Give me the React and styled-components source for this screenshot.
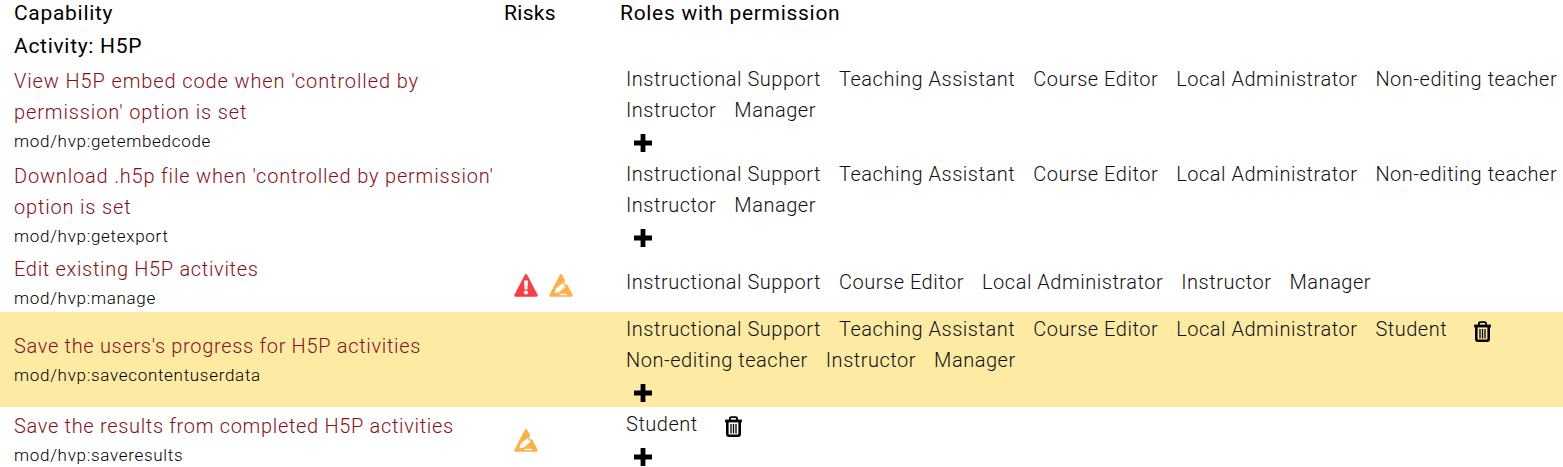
import React from "react";
import styled, { createGlobalStyle } from "styled-components";

const Global = createGlobalStyle`
  html, body { margin: 0; padding: 0; background: #fff; overflow: hidden; }
  body { font-family: Roboto, "Liberation Sans", sans-serif; font-size: 20px; color: #1d2125; font-weight: 300; letter-spacing: .52px; }
`;
const Page = styled.div`width: 1563px; height: 467px; overflow: hidden;`;
const Row = styled.div`
  display: grid;
  grid-template-columns: 504px 116px 1fr;
  height: ${p => p.$h}px;
  background: ${p => p.$hl ? "#fdeba4" : "transparent"};
  margin-bottom: ${p => p.$mb ?? 1}px;
`;
const HeadCell = styled.div`
  color: #000;
  font-weight: 400;
  font-size: 21px;
  letter-spacing: ${p => p.$ls ?? .7}px;
  line-height: 26px;
  padding-left: ${p => p.$left ?? 0}px;
`;
const CapCell = styled.div`
  padding: ${p => p.$top ?? 0}px 0 ${p => p.$bottom ?? 0}px 14px;
  display: flex;
  flex-direction: column;
  justify-content: center;
  box-sizing: border-box;
  white-space: nowrap;
`;
const CapName = styled.div`
  color: #8a0f18;
  letter-spacing: ${p => p.$ls ?? .68}px;
  line-height: 31px;
  white-space: pre-line;
`;
const CapId = styled.div`color: #000; font-size: 17px; letter-spacing: .7px; line-height: 27px;`;
const RiskCell = styled.div`
  display: flex;
  align-items: center;
  gap: 11px;
  padding: ${p => p.$top ?? 0}px 0 0 10px;
`;
const RolesCell = styled.div`padding: ${p => p.$top ?? 0}px 0 0 6px;`;
const RoleLine = styled.div`
  display: flex;
  gap: 18px;
  height: 31px;
  line-height: 31px;
  white-space: nowrap;
`;
const Role = styled.span`color: #111;`;
const IconBtn = styled.span`
  display: flex;
  align-items: center;
  margin-left: ${p => p.$ml ?? 0}px;
  padding-top: 3px;
`;
const AddBtn = styled.div`
  height: 31px;
  padding: 2px 0 0 7px;
  box-sizing: border-box;
  display: flex;
  align-items: center;
`;

const Plus = () => (
  <svg width="20" height="20" viewBox="0 0 20 20"><path d="M7.6 1h4.8v6.6H19v4.8h-6.6V19H7.6v-6.6H1V7.6h6.6z" fill="#000" /></svg>
);
const Trash = () => (
  <svg width="19" height="21" viewBox="0 0 18 21" fill="none">
    <path d="M.6 3.6h16.8V6.4H.6z" fill="#000" />
    <path d="M5.4 4V2.6c0-.9.6-1.5 1.5-1.5h4.2c.9 0 1.5.6 1.5 1.5V4" stroke="#000" strokeWidth="1.9" />
    <path d="M2.8 6v12c0 1 .7 1.7 1.7 1.7h9c1 0 1.7-.7 1.7-1.7V6" stroke="#000" strokeWidth="2.6" />
    <path d="M6.5 8v9.4M9 8v9.4M11.5 8v9.4" stroke="#000" strokeWidth="1.3" />
  </svg>
);
const Warn = ({ color, children }) => (
  <svg width="24" height="24" viewBox="0 0 24 24">
    <path d="M12 2.4 22.4 22.4H1.6z" fill={color} stroke={color} strokeWidth="2.6" strokeLinejoin="round" />
    {children}
  </svg>
);
const Danger = () => (
  <Warn color="#fb3c43">
    <path d="M10 7.6h4l-.6 9h-2.8z" fill="#fff" />
    <circle cx="12" cy="19.6" r="2.1" fill="#fff" />
  </Warn>
);
const Edit = () => (
  <Warn color="#ffb146">
    <path d="M5.4 20.4l1.5-4.8 6.6-5.4 3.1 3.6-6.6 5.4z" fill="#fff" />
    <path d="M14.6 9.3l1.4-1.1c.4-.3.9-.3 1.2.1l1.2 1.5c.3.4.3.9-.1 1.2l-1.4 1.1z" fill="#fff" />
    <path d="M10.5 21.5h7.5" stroke="#fff" strokeWidth="1.3" />
  </Warn>
);

const six = ["Instructional Support", "Teaching Assistant", "Course Editor", "Local Administrator", "Non-editing teacher"];

const Capability = ({ name, id, top, bottom, ls }) => (
  <CapCell $top={top} $bottom={bottom}>
    <CapName $ls={ls}>{name}</CapName>
    <CapId>{id}</CapId>
  </CapCell>
);
const Roles = ({ lines, plus = true, del = {}, top = 0 }) => (
  <RolesCell $top={top}>
    {lines.map((line, i) => (
      <RoleLine key={i}>
        {line.map(r => <Role key={r}>{r}</Role>)}
        {del[i] && <IconBtn $ml={del[i]}><Trash /></IconBtn>}
      </RoleLine>
    ))}
    {plus && <AddBtn><Plus /></AddBtn>}
  </RolesCell>
);

export default function App() {
  return (
    <Page>
      <Global />
      <Row $h={26} $mb={7}>
        <HeadCell $left={14}>Capability</HeadCell>
        <HeadCell $ls={.3}>Risks</HeadCell>
        <HeadCell>Roles with permission</HeadCell>
      </Row>
      <Row $h={26} $mb={5}>
        <HeadCell $left={14}>Activity: H5P</HeadCell>
      </Row>
      <Row $h={94}>
        <Capability ls={.88} bottom={2} name={"View H5P embed code when 'controlled by\npermission' option is set"} id="mod/hvp:getembedcode" />
        <div />
        <Roles lines={[six, ["Instructor", "Manager"]]} />
      </Row>
      <Row $h={94}>
        <Capability ls={.82} bottom={2} name={"Download .h5p file when 'controlled by permission'\noption is set"} id="mod/hvp:getexport" />
        <div />
        <Roles lines={[six, ["Instructor", "Manager"]]} />
      </Row>
      <Row $h={57}>
        <Capability name="Edit existing H5P activites" id="mod/hvp:manage" />
        <RiskCell $top={3}><Danger /><Edit /></RiskCell>
        <Roles top={13} plus={false} lines={[["Instructional Support", "Course Editor", "Local Administrator", "Instructor", "Manager"]]} />
      </Row>
      <Row $h={95} $hl>
        <Capability name="Save the users's progress for H5P activities" id="mod/hvp:savecontentuserdata" />
        <div />
        <Roles top={2} del={{ 0: 8 }} lines={[["Instructional Support", "Teaching Assistant", "Course Editor", "Local Administrator", "Student"], ["Non-editing teacher", "Instructor", "Manager"]]} />
      </Row>
      <Row $h={60}>
        <Capability top={1} name="Save the results from completed H5P activities" id="mod/hvp:saveresults" />
        <RiskCell $top={1}><Edit /></RiskCell>
        <Roles top={1} del={{ 0: 8 }} lines={[["Student"]]} />
      </Row>
    </Page>
  );
}
